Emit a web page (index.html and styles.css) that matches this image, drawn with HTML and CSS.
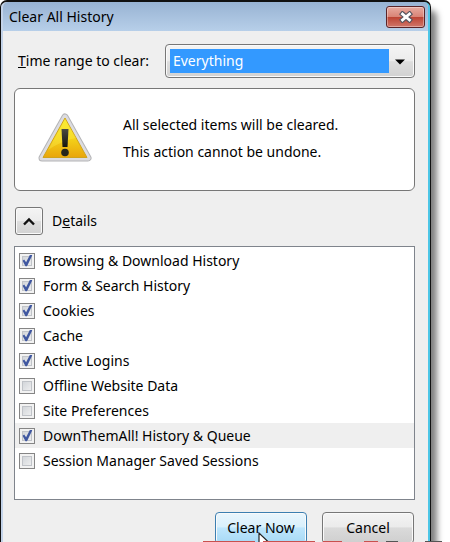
FILE: index.html
```html
<!DOCTYPE html>
<html lang="en">
<head>
    <meta charset="UTF-8">
    <meta name="viewport" content="width=device-width, initial-scale=1.0">
    <title>Clear All History</title>
    <link rel="stylesheet" href="styles.css">
</head>
<body>
    <div class="dialog">
        <!-- Title bar -->
        <div class="titlebar">
            <h1>Clear All History</h1>
            <button class="close-btn" type="button" aria-label="Close">
                <svg width="14" height="12" viewBox="0 0 14 12">
                    <path d="M3.500 3 L10.500 9 M10.500 3 L3.500 9" stroke="#54545f" stroke-width="5" stroke-linecap="square"/>
                    <path d="M3.500 3 L10.500 9 M10.500 3 L3.500 9" stroke="#fff" stroke-width="2.800" stroke-linecap="square"/>
                </svg>
            </button>
        </div>

        <form class="content">
            <div class="range">
                <label for="range"><u>T</u>ime range to clear:</label>
                <div class="select-box">
                    <select id="range">
                        <option>Everything</option>
                    </select>
                    <svg class="arrow" width="10" height="6" viewBox="0 0 10 6"><path d="M0 0.5 H10 L5 5.5 Z"/></svg>
                </div>
            </div>

            <!-- Warning -->
            <div class="warning">
                <svg class="warning-icon" width="54" height="50" viewBox="0 0 54 50">
                    <defs>
                        <linearGradient id="yellow" x1="0" y1="0" x2="0" y2="1">
                            <stop offset="0" stop-color="#f8ea22"/>
                            <stop offset="0.55" stop-color="#f3cf17"/>
                            <stop offset="1" stop-color="#e9a50c"/>
                        </linearGradient>
                        <linearGradient id="mark" x1="0" y1="0" x2="0" y2="1">
                            <stop offset="0" stop-color="#4a4a40"/>
                            <stop offset="1" stop-color="#16160f"/>
                        </linearGradient>
                    </defs>
                    <path d="M27 4 L50 45 H4 Z" fill="#a9a9ab" stroke="#b4b4b6" stroke-width="7" stroke-linejoin="round"/>
                    <path d="M27 4 L50 45 H4 Z" fill="#dcdce0" stroke="#dcdce0" stroke-width="5" stroke-linejoin="round"/>
                    <path d="M27 5 L49 44.500 H5 Z" fill="url(#yellow)" stroke="#d0a41c" stroke-width="1" stroke-linejoin="round"/>
                    <path d="M27 6 L38 25 Q25 27 10 37 Z" fill="#fff45a" opacity="0.3"/>
                    <path d="M23.500 16 H30.500 L29.500 34 H24.500 Z" fill="url(#mark)"/>
                    <circle cx="27" cy="39.500" r="3.800" fill="#25251c"/>
                </svg>
                <div class="warning-text">
                    <p>All selected items will be cleared.</p>
                    <p>This action cannot be undone.</p>
                </div>
            </div>

            <div class="details">
                <button class="toggle-btn" type="button" id="toggle" aria-label="Details">
                    <svg width="14" height="9" viewBox="0 0 14 9"><path d="M2 7.500 L7 2.500 L12 7.500" fill="none" stroke="#111" stroke-width="2.400"/></svg>
                </button>
                <label for="toggle">D<u>e</u>tails</label>
            </div>

            <!-- Items to clear -->
            <div class="items">
                <label class="item"><input type="checkbox" checked>Browsing &amp; Download History</label>
                <label class="item"><input type="checkbox" checked>Form &amp; Search History</label>
                <label class="item"><input type="checkbox" checked>Cookies</label>
                <label class="item"><input type="checkbox" checked>Cache</label>
                <label class="item"><input type="checkbox" checked>Active Logins</label>
                <label class="item"><input type="checkbox">Offline Website Data</label>
                <label class="item"><input type="checkbox">Site Preferences</label>
                <label class="item selected"><input type="checkbox" checked>DownThemAll! History &amp; Queue</label>
                <label class="item"><input type="checkbox">Session Manager Saved Sessions</label>
            </div>

            <div class="buttons">
                <button class="btn primary" type="button">Clear Now</button>
                <button class="btn" type="button">Cancel</button>
            </div>
        </form>
    </div>

    <!-- Mouse pointer -->
    <svg class="pointer" width="14" height="20" viewBox="0 0 14 20">
        <path d="M1 1 V17 L5 13.500 L7.500 19 L10 18 L7.500 12.500 H13 Z" fill="#fff" stroke="#222" stroke-width="1.200"/>
    </svg>

    <!-- Top edge of the stamp below the dialog -->
    <svg class="stamp" width="240" height="1" viewBox="0 0 240 1">
        <path d="M0 0 H52 V1 H0 Z M60 0 H112 V1 H60 Z M120 0 H139 V1 H120 Z M161 0 H175 V1 H161 Z" fill="#c9504e"/>
        <path d="M183 0 H195 V1 H183 Z M222 0 H239 V1 H222 Z" fill="#555"/>
    </svg>
</body>
</html>
```

FILE: styles.css
```css
* {
    box-sizing: border-box;
}

body {
    margin: 0;
    height: 100vh;
    overflow: hidden;
    position: relative;
    background-color: #fff;
    color: #000;
    font-family: "Noto Sans", "Open Sans", sans-serif;
    font-size: 14px;
    line-height: 20px;
}

/* Window frame */
.dialog {
    margin-right: 19px;
    background-color: #efefef;
    border: 1px solid #111;
    border-top-width: 2px;
    border-radius: 7px 7px 0 0;
    box-shadow: inset 2px 0 #c3d3e9, inset -2px 0 #4dc6e6, 6px 10px 6px rgba(0, 0, 0, 0.5);
}

.titlebar {
    display: flex;
    justify-content: space-between;
    align-items: flex-start;
    margin: 0 2px;
    height: 29px;
    padding: 4px 3px 0 6px;
    border-radius: 5px 5px 0 0;
    background: linear-gradient(#98b3d3, #b7cfe9);
}

.titlebar h1 {
    margin: 0;
    padding-top: 1px;
    font-size: 14px;
    font-weight: normal;
    line-height: 20px;
}

.close-btn {
    display: flex;
    justify-content: center;
    align-items: center;
    width: 39px;
    height: 22px;
    padding: 0;
    border: 1px solid #5b2428;
    border-radius: 3px;
    background: linear-gradient(#e8aaa0, #d98476 48%, #bd4434 52%, #d0766a);
    box-shadow: inset 0 0 0 1px rgba(255, 255, 255, 0.35);
}

.content {
    padding: 13px 15px 0 13px;
}

/* Time range row */
.range {
    display: flex;
    align-items: center;
    gap: 16px;
    padding-left: 4px;
}

.select-box {
    position: relative;
    flex: 1;
    height: 34px;
    padding: 4px 25px 4px 4px;
    border: 1px solid #777;
    border-radius: 4px;
    background: linear-gradient(#f4f4f4, #ececec 50%, #dedede 52%, #d2d2d2);
    box-shadow: inset 0 0 0 1px #fafafa;
}

.select-box select {
    display: block;
    width: 100%;
    height: 24px;
    padding: 0 3px;
    border: none;
    border-radius: 0;
    appearance: none;
    background-color: #3399ff;
    color: #fff;
    font: inherit;
}

.arrow {
    position: absolute;
    top: 14px;
    right: 9px;
    pointer-events: none;
}

/* Warning box */
.warning {
    display: flex;
    align-items: center;
    gap: 31px;
    height: 103px;
    margin-top: 10px;
    padding: 0 0 3px 23px;
    border: 1px solid #777;
    border-radius: 6px;
    background-color: #fff;
}

.warning-text {
    display: flex;
    flex-direction: column;
    gap: 7px;
}

.warning-text p {
    margin: 0;
}

/* Details row */
.details {
    display: flex;
    align-items: center;
    gap: 9px;
    margin-top: 16px;
    padding-left: 1px;
}

.toggle-btn {
    display: flex;
    justify-content: center;
    align-items: center;
    width: 28px;
    height: 28px;
    padding: 0;
    border: 1px solid #777;
    border-radius: 3px;
    background: linear-gradient(#f4f4f4, #ececec 50%, #dedede 52%, #d2d2d2);
    box-shadow: inset 0 0 0 1px #fafafa;
}

/* List of items */
.items {
    height: 254px;
    margin-top: 11px;
    padding-top: 1px;
    border: 1px solid #7f848c;
    background-color: #fff;
}

.item {
    display: flex;
    align-items: center;
    gap: 8px;
    height: 25px;
    padding-left: 4px;
}

.item.selected {
    background-color: #efefef;
}

.item input {
    display: grid;
    place-items: center;
    width: 16px;
    height: 16px;
    margin: 0;
    appearance: none;
    border: 1px solid #858585;
    background: linear-gradient(135deg, #c9cdd2, #f6f6f6);
    box-shadow: inset 0 0 0 2px #f2f2f2, inset 0 0 0 3px #c0c3c8;
}

.item input:checked::before {
    content: "";
    width: 11px;
    height: 12px;
    background-color: #3f57a0;
    clip-path: polygon(10% 52%, 24% 42%, 42% 65%, 78% 0, 98% 6%, 50% 98%, 36% 98%);
}

/* Buttons */
.buttons {
    display: flex;
    justify-content: flex-end;
    gap: 15px;
    margin-top: 12px;
    padding: 0 1px 14px 0;
}

.btn {
    width: 92px;
    height: 32px;
    padding: 0;
    border: 1px solid #777;
    border-radius: 4px;
    background: linear-gradient(#f4f4f4, #ebebeb 46%, #dadada 50%, #cfcfcf);
    box-shadow: inset 0 0 0 1px #fafafa;
    color: #000;
    font: inherit;
}

.btn.primary {
    border-color: #3c7fb1;
    background: linear-gradient(#eaf6fd, #d9f0fc 46%, #bee6fd 50%, #a7d9f5);
}

.pointer {
    position: absolute;
    top: 532px;
    left: 258px;
}

.stamp {
    position: absolute;
    bottom: 0;
    left: 203px;
}
```
